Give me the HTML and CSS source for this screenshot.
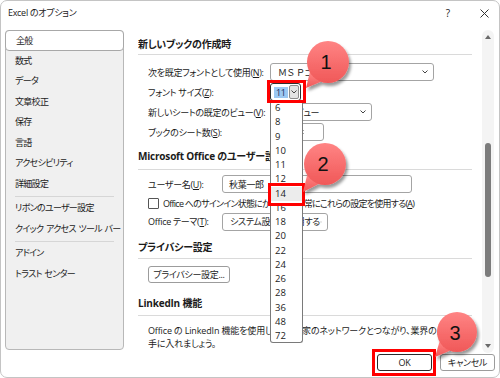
FILE: index.html
```html
<!DOCTYPE html>
<html lang="ja">
<head>
    <meta charset="UTF-8">
    <meta name="viewport" content="width=device-width, initial-scale=1.0">
    <title>Excel のオプション</title>
    <link rel="stylesheet" href="styles.css">
</head>
<body>
    <div class="window">
        <div class="titlebar">
            <span class="title">Excel のオプション</span>
            <span class="help">?</span>
            <svg class="close" width="9" height="9" viewBox="0 0 9 9">
                <path d="M0.5 0.5 L8.5 8.5 M8.5 0.5 L0.5 8.5" stroke="#333" stroke-width="1" fill="none"/>
            </svg>
        </div>

        <div class="main">
            <ul class="sidebar">
                <li class="active">全般</li>
                <li>数式</li>
                <li>データ</li>
                <li>文章校正</li>
                <li>保存</li>
                <li>言語</li>
                <li>アクセシビリティ</li>
                <li>詳細設定</li>
                <li class="sep"></li>
                <li>リボンのユーザー設定</li>
                <li>クイック アクセス ツール バー</li>
                <li class="sep"></li>
                <li>アドイン</li>
                <li>トラスト センター</li>
            </ul>

            <div class="content">
                <h2 class="section-title s1">新しいブックの作成時</h2>
                <div class="rule r1"></div>
                <div class="rows rows-1">
                    <div class="row">
                        <label>次を既定フォントとして使用(<u>N</u>):</label>
                        <div class="select font-name"><span class="fw">ＭＳ Ｐゴシック</span>
                            <svg class="chev" width="6" height="4" viewBox="0 0 6 4"><path d="M0.5 0.5 L3 3 L5.5 0.5" fill="none" stroke="#444"/></svg>
                        </div>
                    </div>
                    <div class="row">
                        <label>フォント サイズ(<u>Z</u>):</label>
                        <div class="combo">
                            <span class="combo-value"><span class="selected">11</span></span>
                            <span class="combo-btn">
                                <svg width="6" height="4" viewBox="0 0 6 4"><path d="M0.5 0.5 L3 3 L5.5 0.5" fill="none" stroke="#444"/></svg>
                            </span>
                        </div>
                    </div>
                    <div class="row">
                        <label>新しいシートの既定のビュー(<u>V</u>):</label>
                        <div class="select view"><span>標準ビュー</span>
                            <svg class="chev" width="6" height="4" viewBox="0 0 6 4"><path d="M0.5 0.5 L3 3 L5.5 0.5" fill="none" stroke="#444"/></svg>
                        </div>
                    </div>
                    <div class="row">
                        <label>ブックのシート数(<u>S</u>):</label>
                        <div class="spin"><span>1</span>
                            <span class="spin-arrows">
                                <svg width="6" height="4" viewBox="0 0 6 4"><path d="M0.5 3.5 L3 1 L5.5 3.5" fill="none" stroke="#444"/></svg>
                                <svg width="6" height="4" viewBox="0 0 6 4"><path d="M0.5 0.5 L3 3 L5.5 0.5" fill="none" stroke="#444"/></svg>
                            </span>
                        </div>
                    </div>
                </div>

                <h2 class="section-title s2">Microsoft Office のユーザー設定</h2>
                <div class="rule r2"></div>
                <div class="rows rows-2">
                    <div class="row">
                        <label>ユーザー名(<u>U</u>):</label>
                        <div class="input user">秋葉一郎</div>
                    </div>
                    <div class="row check-row">
                        <span class="checkbox"></span>
                        <span class="check-label">Office へのサインイン状態にかかわらず、常にこれらの設定を使用する(<u>A</u>)</span>
                    </div>
                    <div class="row theme-row">
                        <label>Office テーマ(<u>T</u>):</label>
                        <div class="select theme"><span>システム設定を使用する</span>
                            <svg class="chev" width="6" height="4" viewBox="0 0 6 4"><path d="M0.5 0.5 L3 3 L5.5 0.5" fill="none" stroke="#444"/></svg>
                        </div>
                    </div>
                </div>

                <h2 class="section-title s3">プライバシー設定</h2>
                <div class="rule r3"></div>
                <div class="rows">
                    <button class="btn privacy">プライバシー設定...</button>
                </div>

                <h2 class="section-title s4">LinkedIn 機能</h2>
                <div class="rule r4"></div>
                <p class="linkedin">Office の LinkedIn 機能を使用して、専門家のネットワークとつながり、業界の最新情報を<br>手に入れましょう。</p>
            </div>

            <div class="scrollbar">
                <span class="arrow-up"></span>
                <span class="thumb"></span>
                <span class="arrow-down"></span>
            </div>
        </div>

        <div class="footer">
            <button class="btn ok">OK</button>
            <button class="btn cancel">キャンセル</button>
        </div>

        <ul class="size-list">
            <li>6</li>
            <li>8</li>
            <li>9</li>
            <li>10</li>
            <li>11</li>
            <li>12</li>
            <li class="hover">14</li>
            <li>16</li>
            <li>18</li>
            <li>20</li>
            <li>22</li>
            <li>24</li>
            <li>26</li>
            <li>28</li>
            <li>36</li>
            <li>48</li>
            <li>72</li>
        </ul>

        <div class="mark mark-1"></div>
        <div class="mark mark-2"></div>
        <div class="mark mark-3"></div>

        <svg class="callouts" width="500" height="378" viewBox="0 0 500 378">
            <defs>
                <linearGradient id="bubble" x1="0" y1="0" x2="0" y2="1">
                    <stop offset="0" stop-color="#ff8484"/>
                    <stop offset="1" stop-color="#f05858"/>
                </linearGradient>
                <filter id="shadow" x="-30%" y="-30%" width="160%" height="160%">
                    <feDropShadow dx="2" dy="3" stdDeviation="1.6" flood-color="#000" flood-opacity="0.4"/>
                </filter>
            </defs>
            <g filter="url(#shadow)" fill="url(#bubble)">
                <path d="M309.8 72.5 L306 88 L320.8 81.7 Z"/>
                <circle cx="328" cy="62" r="21"/>
            </g>
            <g filter="url(#shadow)" fill="url(#bubble)">
                <path d="M307.2 175.1 L303 192 L318.5 184 Z"/>
                <circle cx="325" cy="164" r="21"/>
            </g>
            <g filter="url(#shadow)" fill="url(#bubble)">
                <path d="M439.5 341.7 L435 357 L449.8 350.7 Z"/>
                <circle cx="457" cy="332" r="20"/>
            </g>
            <text class="num" x="326" y="69">1</text>
            <text class="num" x="323" y="171">2</text>
            <text class="num" x="455" y="340">3</text>
        </svg>
    </div>
</body>
</html>
```

FILE: styles.css
```css
* {
    margin: 0;
    padding: 0;
    box-sizing: border-box;
}

body {
    background: #ffffff;
    font-family: "Open Sans", "Noto Sans CJK JP", sans-serif;
    font-size: 9px;
    font-feature-settings: "palt";
    color: #1b1b1b;
}

.window {
    position: relative;
    width: 500px;
    height: 378px;
    border: 1px solid #c4c4c4;
    border-radius: 7px;
    background: #ffffff;
    overflow: hidden;
}

/* title bar */
.titlebar {
    height: 29px;
    display: flex;
    align-items: flex-start;
    padding: 5px 10px 0 7px;
}

.title {
    flex: 1;
    line-height: 14px;
    letter-spacing: -0.3px;
}

.help {
    line-height: 14px;
    font-size: 10px;
    margin-right: 30px;
}

.close {
    margin-top: 3px;
}

/* main area */
.main {
    display: flex;
    height: 323px;
    padding-left: 4px;
}

.sidebar {
    list-style: none;
    width: 119px;
    height: 320px;
    background: #f0f0f0;
    border: 1px solid #b8b8b8;
    border-radius: 4px;
    flex-shrink: 0;
}

.sidebar li {
    height: 20.5px;
    line-height: 19px;
    padding-left: 9px;
    white-space: nowrap;
    letter-spacing: -0.7px;
    word-spacing: 1px;
}

.sidebar li.active {
    background: #ffffff;
    border: 1px solid #a8a8a8;
    border-radius: 4px;
    margin: -1px -1px 0 -1px;
    padding-left: 10px;
}

.sidebar li.sep {
    height: 1px;
    background: #d6d6d6;
    margin: 2px 9px 1px;
}

.content {
    width: 334px;
    height: 320px;
    margin-left: 14px;
    overflow: hidden;
    letter-spacing: -0.3px;
}

.section-title {
    font-size: 10px;
    font-weight: bold;
    line-height: 16px;
    height: 16px;
    white-space: nowrap;
    letter-spacing: -0.2px;
}

.s1 { margin-top: 6px; }
.s2 { margin-top: 6px; }
.s3 { margin-top: 8px; }
.s4 { margin-top: 12px; }

.rule {
    height: 1px;
    background: #dadada;
}

.r1 { margin-top: 2px; }
.r2 { margin-top: 5px; }
.r3 { margin-top: 3px; }
.r4 { margin-top: 4px; }

.rows {
    padding-left: 10px;
}

.rows-1 { margin-top: 7px; }
.rows-2 { margin-top: 4px; }

.row {
    display: flex;
    align-items: center;
    height: 20px;
    white-space: nowrap;
}

.rows-1 label {
    width: 122px;
}

.rows-2 label {
    width: 74px;
}

.check-row {
    height: 18px;
}

.check-label {
    letter-spacing: -0.75px;
}

.theme-row {
    height: 19px;
}

.select,
.input,
.spin {
    height: 18px;
    border: 1px solid #a4a4a4;
    border-radius: 3px;
    background: #ffffff;
    display: flex;
    align-items: center;
    padding: 0 5px 0 7px;
}

.select span,
.spin span {
    flex: 1;
}

.fw {
    font-feature-settings: normal;
    letter-spacing: -0.8px;
}

.font-name { width: 164px; }
.view { width: 102px; }
.spin { width: 54px; }
.user { width: 190px; padding-left: 6px; }
.theme { width: 106px; }

.spin-arrows {
    display: flex;
    flex-direction: column;
    gap: 2px;
}

.combo {
    width: 31px;
    height: 18px;
    border: 1px solid #2e2e2e;
    border-radius: 3px;
    display: flex;
    align-items: center;
    padding: 1px;
}

.combo-value {
    flex: 1;
    padding-left: 2px;
    display: flex;
    align-items: center;
}

.selected {
    background: #9cc8f2;
    color: #1a2c5a;
    padding: 0 2px;
    line-height: 11px;
}

.combo-btn {
    width: 10px;
    height: 14px;
    background: #e3e3e3;
    border: 1px solid #8c8c8c;
    border-radius: 2px;
    display: flex;
    align-items: center;
    justify-content: center;
}

.checkbox {
    width: 11px;
    height: 11px;
    border: 1px solid #555555;
    border-radius: 1px;
    margin-right: 4px;
}

.btn {
    font-family: inherit;
    font-size: inherit;
    font-feature-settings: "palt";
    letter-spacing: -0.3px;
    color: #1b1b1b;
    background: #ffffff;
    border: 1px solid #9c9c9c;
    border-radius: 3px;
    height: 17px;
}

.privacy {
    width: 82px;
    margin-top: 7px;
}

.linkedin {
    margin-top: 8px;
    padding-left: 10px;
    line-height: 13px;
    white-space: nowrap;
    letter-spacing: -0.15px;
}

/* scrollbar */
.scrollbar {
    width: 12px;
    height: 323px;
    margin-left: 10px;
    background: #f4f4f4;
    border-radius: 6px;
    display: flex;
    flex-direction: column;
    align-items: center;
}

.arrow-up,
.arrow-down {
    width: 0;
    height: 0;
    border-left: 3px solid transparent;
    border-right: 3px solid transparent;
}

.arrow-up {
    margin-top: 5px;
    border-bottom: 4px solid #6a6a6a;
}

.thumb {
    width: 6px;
    height: 134px;
    margin-top: 104px;
    background: #7c7c7c;
    border-radius: 3px;
}

.arrow-down {
    margin-top: 67px;
    border-top: 4px solid #6a6a6a;
}

/* footer */
.footer {
    display: flex;
    justify-content: flex-end;
    gap: 8px;
    padding: 1px 4px 0 0;
}

.footer .btn {
    width: 55px;
    height: 17px;
}

.ok {
    border: 1px solid #2b2b2b;
}

/* open font size list */
.size-list {
    position: absolute;
    left: 269px;
    top: 100px;
    width: 33px;
    height: 242px;
    list-style: none;
    background: #ffffff;
    border: 1px solid #7a7a7a;
    border-top: none;
    border-radius: 0 0 3px 3px;
    font-size: 9.5px;
}

.size-list li {
    height: 14.25px;
    line-height: 14.25px;
    padding-left: 4px;
}

.size-list li.hover {
    background: #ececec;
}

/* annotations */
.mark {
    position: absolute;
    border: 3px solid #ff0000;
}

.mark-1 {
    left: 266px;
    top: 79px;
    width: 39px;
    height: 23px;
}

.mark-2 {
    left: 267px;
    top: 182px;
    width: 37px;
    height: 23px;
}

.mark-3 {
    left: 371px;
    top: 348px;
    width: 64px;
    height: 27px;
}

.callouts {
    position: absolute;
    left: -1px;
    top: -1px;
    pointer-events: none;
}

.num {
    font-family: "Liberation Sans", sans-serif;
    font-size: 20px;
    text-anchor: middle;
    fill: #111111;
}
```
